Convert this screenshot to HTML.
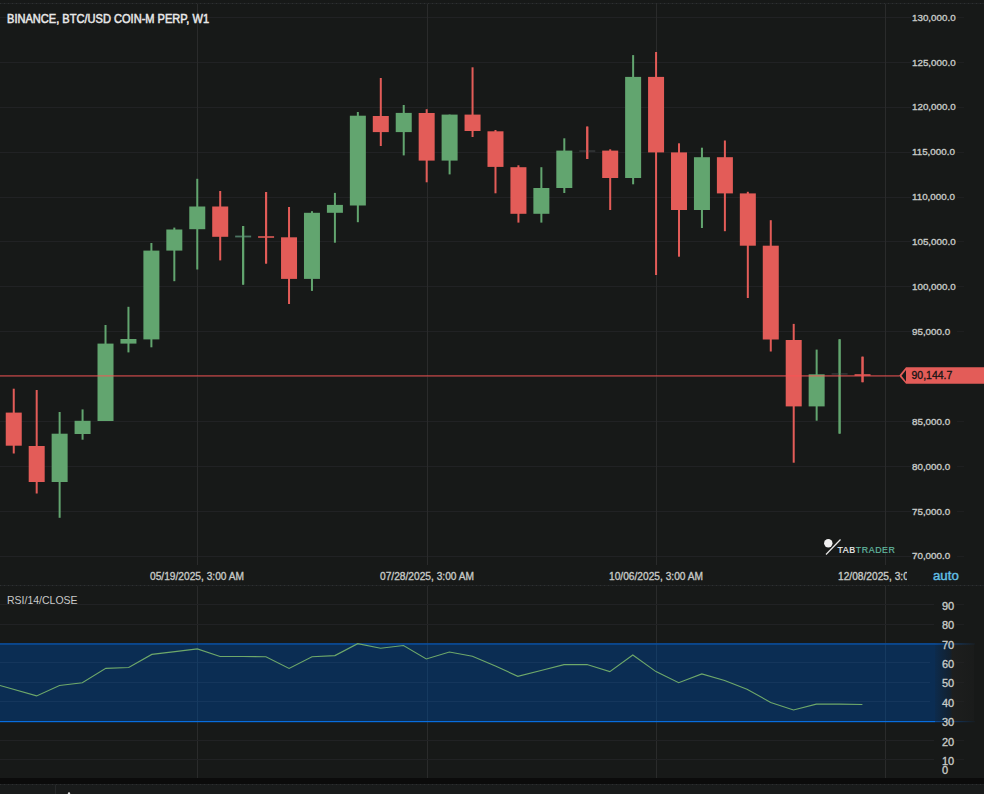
<!DOCTYPE html>
<html><head><meta charset="utf-8"><style>
html,body{margin:0;padding:0;}
body{width:984px;height:794px;background:#171918;overflow:hidden;position:relative;font-family:"Liberation Sans",sans-serif;}
.t{position:absolute;white-space:nowrap;line-height:1;}
.pl{font-size:9.8px;font-weight:normal;-webkit-text-stroke:0.35px #c7cac7;color:#c7cac7;left:912px;}
.rl{font-size:11px;font-weight:normal;-webkit-text-stroke:0.35px #c7cac7;color:#c7cac7;left:942px;}
.dl{font-size:11px;font-weight:normal;-webkit-text-stroke:0.35px #c7cac7;color:#c7cac7;transform:scaleX(0.926);transform-origin:0 0;}
</style></head><body>
<svg width="984" height="794" style="position:absolute;left:0;top:0">
<rect x="0" y="17" width="911" height="1" fill="#212224"/>
<rect x="957" y="17" width="7" height="1" fill="#1e1f20"/>
<rect x="0" y="62" width="911" height="1" fill="#212224"/>
<rect x="957" y="62" width="7" height="1" fill="#1e1f20"/>
<rect x="0" y="107" width="911" height="1" fill="#212224"/>
<rect x="957" y="107" width="7" height="1" fill="#1e1f20"/>
<rect x="0" y="152" width="911" height="1" fill="#212224"/>
<rect x="957" y="152" width="7" height="1" fill="#1e1f20"/>
<rect x="0" y="197" width="911" height="1" fill="#212224"/>
<rect x="957" y="197" width="7" height="1" fill="#1e1f20"/>
<rect x="0" y="241" width="911" height="1" fill="#212224"/>
<rect x="957" y="241" width="7" height="1" fill="#1e1f20"/>
<rect x="0" y="286" width="911" height="1" fill="#212224"/>
<rect x="957" y="286" width="7" height="1" fill="#1e1f20"/>
<rect x="0" y="331" width="911" height="1" fill="#212224"/>
<rect x="957" y="331" width="7" height="1" fill="#1e1f20"/>
<rect x="0" y="376" width="911" height="1" fill="#212224"/>
<rect x="957" y="376" width="7" height="1" fill="#1e1f20"/>
<rect x="0" y="421" width="911" height="1" fill="#212224"/>
<rect x="957" y="421" width="7" height="1" fill="#1e1f20"/>
<rect x="0" y="466" width="911" height="1" fill="#212224"/>
<rect x="957" y="466" width="7" height="1" fill="#1e1f20"/>
<rect x="0" y="511" width="911" height="1" fill="#212224"/>
<rect x="957" y="511" width="7" height="1" fill="#1e1f20"/>
<rect x="0" y="556" width="911" height="1" fill="#212224"/>
<rect x="957" y="556" width="7" height="1" fill="#1e1f20"/>
<rect x="197" y="4" width="1" height="561" fill="#2a2b2b"/>
<rect x="197" y="586" width="1" height="192" fill="#2a2b2b"/>
<rect x="427" y="4" width="1" height="561" fill="#2a2b2b"/>
<rect x="427" y="586" width="1" height="192" fill="#2a2b2b"/>
<rect x="656" y="4" width="1" height="561" fill="#2a2b2b"/>
<rect x="656" y="586" width="1" height="192" fill="#2a2b2b"/>
<rect x="885" y="4" width="1" height="561" fill="#2a2b2b"/>
<rect x="885" y="586" width="1" height="192" fill="#2a2b2b"/>
<rect x="0" y="604" width="934" height="1" fill="#212224"/>
<rect x="956" y="604" width="8" height="1" fill="#1e1f20"/>
<rect x="0" y="624" width="934" height="1" fill="#212224"/>
<rect x="956" y="624" width="8" height="1" fill="#1e1f20"/>
<rect x="0" y="662" width="934" height="1" fill="#212224"/>
<rect x="956" y="662" width="8" height="1" fill="#1e1f20"/>
<rect x="0" y="682" width="934" height="1" fill="#212224"/>
<rect x="956" y="682" width="8" height="1" fill="#1e1f20"/>
<rect x="0" y="701" width="934" height="1" fill="#212224"/>
<rect x="956" y="701" width="8" height="1" fill="#1e1f20"/>
<rect x="0" y="740" width="934" height="1" fill="#212224"/>
<rect x="956" y="740" width="8" height="1" fill="#1e1f20"/>
<rect x="0" y="759" width="934" height="1" fill="#212224"/>
<rect x="956" y="759" width="8" height="1" fill="#1e1f20"/>
<rect x="0" y="643.5" width="935" height="77.5" fill="#0b2d53"/>
<defs><linearGradient id="fade" x1="0" x2="1" y1="0" y2="0"><stop offset="0" stop-color="#0b2d53" stop-opacity="0.9"/><stop offset="0.38" stop-color="#0b2d53" stop-opacity="0.4"/><stop offset="0.45" stop-color="#252525" stop-opacity="0.45"/><stop offset="1" stop-color="#252525" stop-opacity="0.2"/></linearGradient></defs>
<rect x="935" y="643.5" width="39" height="77.5" fill="url(#fade)"/>
<rect x="0" y="662" width="930" height="1" fill="#15365c"/>
<rect x="0" y="682" width="930" height="1" fill="#15365c"/>
<rect x="0" y="701" width="930" height="1" fill="#15365c"/>
<rect x="197" y="644" width="1" height="77" fill="#163a60"/>
<rect x="427" y="644" width="1" height="77" fill="#163a60"/>
<rect x="656" y="644" width="1" height="77" fill="#163a60"/>
<rect x="885" y="644" width="1" height="77" fill="#163a60"/>
<rect x="0" y="643.2" width="935" height="1.5" fill="#0b50a2"/>
<rect x="0" y="721" width="935" height="1.2" fill="#076de0"/>
<defs><linearGradient id="fl" x1="0" x2="1" y1="0" y2="0"><stop offset="0" stop-color="#0a5fc8" stop-opacity="0.7"/><stop offset="1" stop-color="#0a5fc8" stop-opacity="0.05"/></linearGradient></defs>
<rect x="935" y="643.2" width="40" height="1.5" fill="url(#fl)"/>
<rect x="935" y="721" width="40" height="1.2" fill="url(#fl)"/>
<rect x="12.75" y="388.7" width="2" height="64.8" fill="#e35c58"/>
<rect x="5.75" y="412.6" width="16" height="33.1" fill="#e35c58"/>
<rect x="35.69" y="390.0" width="2" height="103.5" fill="#e35c58"/>
<rect x="28.69" y="446.0" width="16" height="36.0" fill="#e35c58"/>
<rect x="58.63" y="412.0" width="2" height="105.8" fill="#62a56f"/>
<rect x="51.63" y="433.7" width="16" height="48.3" fill="#62a56f"/>
<rect x="81.57" y="409.4" width="2" height="30.3" fill="#62a56f"/>
<rect x="74.57" y="420.8" width="16" height="13.2" fill="#62a56f"/>
<rect x="104.51" y="325.0" width="2" height="96.0" fill="#62a56f"/>
<rect x="97.51" y="343.6" width="16" height="77.4" fill="#62a56f"/>
<rect x="127.45" y="306.8" width="2" height="45.6" fill="#62a56f"/>
<rect x="120.45" y="339.0" width="16" height="4.6" fill="#62a56f"/>
<rect x="150.39" y="243.0" width="2" height="104.3" fill="#62a56f"/>
<rect x="143.39" y="250.6" width="16" height="88.8" fill="#62a56f"/>
<rect x="173.33" y="227.6" width="2" height="53.6" fill="#62a56f"/>
<rect x="166.33" y="229.5" width="16" height="21.1" fill="#62a56f"/>
<rect x="196.27" y="178.8" width="2" height="90.7" fill="#62a56f"/>
<rect x="189.27" y="206.5" width="16" height="22.7" fill="#62a56f"/>
<rect x="219.21" y="191.0" width="2" height="69.4" fill="#e35c58"/>
<rect x="212.21" y="206.5" width="16" height="30.3" fill="#e35c58"/>
<rect x="242.15" y="226.0" width="2" height="58.6" fill="#62a56f"/>
<rect x="235.15" y="235.6" width="16" height="1.8" fill="#4d7563"/>
<rect x="242.15" y="226.0" width="2" height="58.6" fill="#62a56f"/>
<rect x="265.09" y="192.0" width="2" height="71.5" fill="#e35c58"/>
<rect x="258.09" y="236.0" width="16" height="2.0" fill="#b54c49"/>
<rect x="265.09" y="192.0" width="2" height="71.5" fill="#e35c58"/>
<rect x="288.03" y="207.0" width="2" height="97.0" fill="#e35c58"/>
<rect x="281.03" y="237.3" width="16" height="41.6" fill="#e35c58"/>
<rect x="310.97" y="211.2" width="2" height="79.7" fill="#62a56f"/>
<rect x="303.97" y="212.8" width="16" height="66.1" fill="#62a56f"/>
<rect x="333.91" y="192.9" width="2" height="49.8" fill="#62a56f"/>
<rect x="326.91" y="204.9" width="16" height="7.9" fill="#62a56f"/>
<rect x="356.85" y="112.0" width="2" height="110.2" fill="#62a56f"/>
<rect x="349.85" y="115.7" width="16" height="89.8" fill="#62a56f"/>
<rect x="379.79" y="78.0" width="2" height="68.0" fill="#e35c58"/>
<rect x="372.79" y="116.0" width="16" height="16.1" fill="#e35c58"/>
<rect x="402.73" y="105.0" width="2" height="50.4" fill="#62a56f"/>
<rect x="395.73" y="112.9" width="16" height="19.2" fill="#62a56f"/>
<rect x="425.67" y="109.2" width="2" height="73.1" fill="#e35c58"/>
<rect x="418.67" y="113.0" width="16" height="47.6" fill="#e35c58"/>
<rect x="448.61" y="114.6" width="2" height="59.8" fill="#62a56f"/>
<rect x="441.61" y="114.6" width="16" height="46.0" fill="#62a56f"/>
<rect x="471.55" y="67.3" width="2" height="69.7" fill="#e35c58"/>
<rect x="464.55" y="114.6" width="16" height="16.4" fill="#e35c58"/>
<rect x="494.49" y="130.0" width="2" height="63.3" fill="#e35c58"/>
<rect x="487.49" y="131.3" width="16" height="35.6" fill="#e35c58"/>
<rect x="517.43" y="165.3" width="2" height="57.3" fill="#e35c58"/>
<rect x="510.43" y="167.2" width="16" height="46.6" fill="#e35c58"/>
<rect x="540.37" y="167.2" width="2" height="55.4" fill="#62a56f"/>
<rect x="533.37" y="188.0" width="16" height="25.8" fill="#62a56f"/>
<rect x="563.31" y="138.3" width="2" height="54.7" fill="#62a56f"/>
<rect x="556.31" y="150.6" width="16" height="37.4" fill="#62a56f"/>
<rect x="586.25" y="126.6" width="2" height="32.4" fill="#e35c58"/>
<rect x="579.25" y="150.3" width="16" height="1.5" fill="#35383a"/>
<rect x="586.25" y="126.6" width="2" height="32.4" fill="#e35c58"/>
<rect x="609.19" y="149.3" width="2" height="60.7" fill="#e35c58"/>
<rect x="602.19" y="150.6" width="16" height="27.4" fill="#e35c58"/>
<rect x="632.13" y="55.1" width="2" height="129.2" fill="#62a56f"/>
<rect x="625.13" y="76.9" width="16" height="101.1" fill="#62a56f"/>
<rect x="655.07" y="52.0" width="2" height="223.0" fill="#e35c58"/>
<rect x="648.07" y="76.9" width="16" height="75.5" fill="#e35c58"/>
<rect x="678.01" y="143.3" width="2" height="113.4" fill="#e35c58"/>
<rect x="671.01" y="152.4" width="16" height="57.6" fill="#e35c58"/>
<rect x="700.95" y="147.7" width="2" height="80.3" fill="#62a56f"/>
<rect x="693.95" y="157.2" width="16" height="52.8" fill="#62a56f"/>
<rect x="723.89" y="140.5" width="2" height="90.7" fill="#e35c58"/>
<rect x="716.89" y="157.2" width="16" height="36.2" fill="#e35c58"/>
<rect x="746.83" y="191.8" width="2" height="106.2" fill="#e35c58"/>
<rect x="739.83" y="193.4" width="16" height="52.3" fill="#e35c58"/>
<rect x="769.77" y="220.2" width="2" height="131.3" fill="#e35c58"/>
<rect x="762.77" y="245.7" width="16" height="93.8" fill="#e35c58"/>
<rect x="792.71" y="323.9" width="2" height="138.8" fill="#e35c58"/>
<rect x="785.71" y="340.0" width="16" height="66.4" fill="#e35c58"/>
<rect x="815.65" y="349.6" width="2" height="71.1" fill="#62a56f"/>
<rect x="808.65" y="374.3" width="16" height="32.1" fill="#62a56f"/>
<rect x="838.59" y="339.3" width="2" height="94.3" fill="#62a56f"/>
<rect x="831.59" y="373.2" width="16" height="1.5" fill="#35383a"/>
<rect x="838.59" y="339.3" width="2" height="94.3" fill="#62a56f"/>
<rect x="861.53" y="356.7" width="2" height="25.5" fill="#e35c58"/>
<rect x="854.53" y="374.0" width="16" height="2.0" fill="#b54c49"/>
<rect x="861.53" y="356.7" width="2" height="25.5" fill="#e35c58"/>
<rect x="0" y="375.1" width="899" height="1.5" fill="rgba(252,84,84,0.62)"/>
<path d="M899,375.8 L906,367.2 L984,367.2 L984,383.8 L906,383.8 Z" fill="#e35c58"/>
<path d="M901.5,375.8 L906,370 L906,381.5 Z" fill="#171918"/>
<polyline points="0.0,685.5 36.6,695.9 59.5,685.5 82.3,682.7 105.8,668.4 128.7,667.5 151.8,654.4 175.0,651.6 197.3,648.9 220.1,656.5 243.0,656.5 265.9,656.8 289.1,668.4 312.0,656.8 334.9,655.6 357.7,643.7 380.6,648.3 403.5,645.5 426.3,659.0 449.4,652.0 472.4,656.2 495.4,666.0 517.8,676.3 541.0,670.5 564.0,664.6 587.0,664.5 609.8,671.6 632.8,655.0 656.0,671.6 678.7,682.7 701.8,673.9 724.6,680.4 747.0,689.2 770.7,702.5 793.5,710.0 816.3,704.1 839.2,704.1 862.4,704.5" fill="none" stroke="#6ea86a" stroke-width="1.1"/>
<rect x="0" y="3" width="984" height="1" fill="#1f2123"/>
<line x1="0" y1="3.5" x2="984" y2="3.5" stroke="#2e3130" stroke-width="1" stroke-dasharray="1,3"/>
<rect x="0" y="585" width="984" height="1" fill="#1f2123"/>
<line x1="0" y1="585.5" x2="984" y2="585.5" stroke="#2e3130" stroke-width="1" stroke-dasharray="1,3"/>
<rect x="0" y="778" width="984" height="6" fill="#0b0b0b"/>
<rect x="0" y="784" width="984" height="10" fill="#191b1b"/>
<rect x="0" y="784" width="984" height="1" fill="#1f2122"/>
<line x1="0" y1="784.5" x2="984" y2="784.5" stroke="#2c2e2f" stroke-width="1" stroke-dasharray="1,3"/>
<rect x="55" y="785" width="1" height="9" fill="#262829"/>
<circle cx="69" cy="793.5" r="1.2" fill="#e0e0e0"/>
<circle cx="828.3" cy="543.3" r="4.2" fill="#f0f0f0"/>
<line x1="826" y1="554.5" x2="840.5" y2="539.5" stroke="#e8e8e8" stroke-width="1.2"/>
</svg>

<div class="t" style="left:7px;top:12.5px;font-size:12px;font-weight:normal;color:#e8e8e8;-webkit-text-stroke:0.5px #e8e8e8;transform:scaleX(0.922);transform-origin:0 0;">BINANCE, BTC/USD COIN-M PERP, W1</div>
<div class="t pl" style="top:12.6px">130,000.0</div>
<div class="t pl" style="top:57.5px">125,000.0</div>
<div class="t pl" style="top:102.4px">120,000.0</div>
<div class="t pl" style="top:147.3px">115,000.0</div>
<div class="t pl" style="top:192.2px">110,000.0</div>
<div class="t pl" style="top:237.1px">105,000.0</div>
<div class="t pl" style="top:282.0px">100,000.0</div>
<div class="t pl" style="top:326.9px">95,000.0</div>
<div class="t pl" style="top:416.7px">85,000.0</div>
<div class="t pl" style="top:461.6px">80,000.0</div>
<div class="t pl" style="top:506.5px">75,000.0</div>
<div class="t pl" style="top:551.4px">70,000.0</div>
<div class="t" style="left:911.5px;top:370px;font-size:10.5px;color:#141414;-webkit-text-stroke:0.3px #141414;">90,144.7</div>
<div class="t dl" style="left:150px;top:571px;">05/19/2025, 3:00 AM</div>
<div class="t dl" style="left:380px;top:571px;">07/28/2025, 3:00 AM</div>
<div class="t dl" style="left:609px;top:571px;">10/06/2025, 3:00 AM</div>
<div class="t" style="left:838px;top:565px;width:69px;height:20px;overflow:hidden"><div class="t dl" style="left:0;top:6px">12/08/2025, 3:00 AM</div></div>
<div class="t" style="left:932.5px;top:570px;font-size:12.5px;font-weight:normal;color:#63c0e6;-webkit-text-stroke:0.4px #63c0e6;transform:scaleX(1.06);transform-origin:0 0;">auto</div>
<div class="t" style="left:7px;top:595px;font-size:10.5px;color:#c9c9c9;">RSI/14/CLOSE</div>
<div class="t rl" style="top:601.0px">90</div>
<div class="t rl" style="top:620.3px">80</div>
<div class="t rl" style="top:640.2px">70</div>
<div class="t rl" style="top:659.3px">60</div>
<div class="t rl" style="top:678.2px">50</div>
<div class="t rl" style="top:698.4px">40</div>
<div class="t rl" style="top:717.3px">30</div>
<div class="t rl" style="top:736.5px">20</div>
<div class="t rl" style="top:756.0px">10</div>
<div class="t rl" style="top:765.0px">0</div>
<div class="t" style="left:837.5px;top:545.5px;font-size:8.8px;letter-spacing:0.6px;"><span style="color:#f0f0f0;-webkit-text-stroke:0.2px #f0f0f0">TAB</span><span style="color:#62b8a0;-webkit-text-stroke:0.2px #62b8a0">TRADER</span></div>
</body></html>
